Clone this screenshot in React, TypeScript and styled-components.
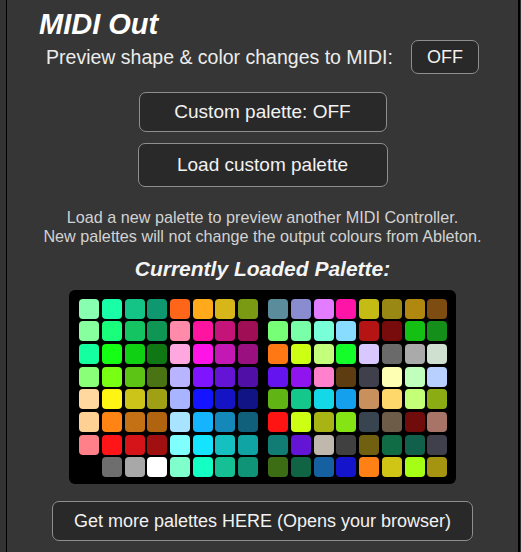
import styled, { createGlobalStyle } from "styled-components";

const GlobalStyle = createGlobalStyle`
  html, body {
    margin: 0;
    padding: 0;
    background: #333333;
  }
  body {
    font-family: "Liberation Sans", Arial, sans-serif;
  }
`;

const leftHalf: (string | null)[][] = [
  ["#88ffb0", "#19ffa8", "#14c486", "#0f9870", "#ff6619", "#ffaa1a", "#d6b619", "#7a9a14"],
  ["#88ff9e", "#19ff7c", "#14c462", "#0f9655", "#ff8aaa", "#ff14a0", "#c4147a", "#a00f55"],
  ["#14ffa0", "#14ff14", "#10d014", "#0f7814", "#ffa8e0", "#ff14e8", "#c418b4", "#9a1080"],
  ["#8aff78", "#78ff14", "#5cc414", "#4a7414", "#b8b4ff", "#7f14ff", "#6414d4", "#5010a8"],
  ["#ffd8a0", "#fff514", "#ccc418", "#a0a014", "#a8b4ff", "#1414ff", "#1414c4", "#101484"],
  ["#ffd094", "#ff8414", "#c47014", "#b06410", "#a8e4ff", "#14b4ff", "#1488b8", "#10607c"],
  ["#ff8088", "#ff1418", "#d41418", "#a01010", "#80ffff", "#14e4ff", "#14c0c0", "#10a4a4"],
  [null, "#6e6e6e", "#a8a8a8", "#ffffff", "#80ffcc", "#14ffc4", "#14c094", "#109478"],
];

const rightHalf: (string | null)[][] = [
  ["#5a8c9c", "#8a8cd0", "#e47cff", "#ff14a8", "#c4bc14", "#9a8814", "#b0880f", "#7c4c10"],
  ["#78ff78", "#78ffa8", "#78ffd8", "#88dcff", "#b41414", "#780c0c", "#14c014", "#14901a"],
  ["#ff7814", "#ccff14", "#c4ff7c", "#14ff2a", "#d8c8ff", "#6a6a6a", "#aaaaaa", "#d0e0d0"],
  ["#6414ee", "#9014ee", "#ff80cc", "#5c3c10", "#40404c", "#ffffb4", "#c0ffbc", "#b8d0ff"],
  ["#60b414", "#14c88c", "#14d8e8", "#14a0ec", "#c8905c", "#ffd86c", "#c4ff78", "#8cac14"],
  ["#ff1414", "#ccff14", "#a8b414", "#84e414", "#384450", "#6c5c48", "#700c0c", "#a87468"],
  ["#107c74", "#6414d4", "#c0b8ac", "#404040", "#706010", "#106c44", "#10604c", "#40404c"],
  ["#3c6c14", "#106444", "#1460a0", "#1414cc", "#ff8014", "#d0c414", "#a4ff14", "#a49410"],
];

const Page = styled.div`
  width: 521px;
  height: 552px;
  display: flex;
  padding: 0 1px 0 6px;
  box-sizing: border-box;
  background: #333333;
`;

const Panel = styled.div`
  flex: 1;
  display: flex;
  flex-direction: column;
  align-items: center;
  padding-top: 8px;
  background: #363636;
  border-left: 1px solid #000;
  border-right: 2px solid #000;
  color: #f2f2f2;
`;

const Title = styled.h1`
  align-self: flex-start;
  margin: 0 0 0 32px;
  font-size: 29px;
  line-height: 32px;
  font-weight: bold;
  font-style: italic;
  color: #ffffff;
`;

const PreviewRow = styled.div`
  display: flex;
  align-items: center;
  gap: 18px;
  height: 34px;
`;

const Label = styled.span`
  font-size: 19.5px;
  color: #ececec;
`;

const Button = styled.button<{ $w: number; $h: number; $size?: number; $mt?: number }>`
  width: ${(p) => p.$w}px;
  height: ${(p) => p.$h}px;
  margin-top: ${(p) => p.$mt ?? 0}px;
  flex-shrink: 0;
  background: #292929;
  border: 1.5px solid #8e8e8e;
  border-radius: 7px;
  color: #f2f2f2;
  font-family: "Liberation Sans", Arial, sans-serif;
  font-size: ${(p) => p.$size ?? 19}px;
  padding: 0;
  cursor: pointer;
`;

const Note = styled.p`
  margin: 21px 0 0;
  font-size: 16.2px;
  line-height: 19px;
  text-align: center;
  color: #d2d2d2;
`;

const PaletteHeading = styled.h2`
  margin: 11px 0 0;
  font-size: 21px;
  line-height: 24px;
  font-weight: bold;
  font-style: italic;
  color: #f4f4f4;
`;

const PaletteBox = styled.div`
  margin-top: 8.5px;
  display: flex;
  gap: 10.4px;
  padding: 9px 9px 7px 10.4px;
  background: #000;
  border-radius: 6px;
`;

const Grid = styled.div`
  display: grid;
  grid-template-columns: repeat(8, 20px);
  grid-auto-rows: 20px;
  gap: 2.7px;
`;

const Cell = styled.div<{ $color: string | null }>`
  border-radius: 4px;
  background: ${(p) => p.$color ?? "transparent"};
`;

const Half = ({ rows }: { rows: (string | null)[][] }) => (
  <Grid>
    {rows.flat().map((c, i) => (
      <Cell key={i} $color={c} />
    ))}
  </Grid>
);

export default function App() {
  return (
    <>
      <GlobalStyle />
      <Page>
        <Panel>
          <Title>MIDI Out</Title>
          <PreviewRow>
            <Label>Preview shape &amp; color changes to MIDI:</Label>
            <Button $w={68} $h={34} $size={18}>
              OFF
            </Button>
          </PreviewRow>
          <Button $w={248} $h={40} $mt={18}>
            Custom palette: OFF
          </Button>
          <Button $w={250} $h={44} $mt={11}>
            Load custom palette
          </Button>
          <Note>
            Load a new palette to preview another MIDI Controller.
            <br />
            New palettes will not change the output colours from Ableton.
          </Note>
          <PaletteHeading>Currently Loaded Palette:</PaletteHeading>
          <PaletteBox>
            <Half rows={leftHalf} />
            <Half rows={rightHalf} />
          </PaletteBox>
          <Button $w={421} $h={40} $size={18} $mt={17}>
            Get more palettes HERE (Opens your browser)
          </Button>
        </Panel>
      </Page>
    </>
  );
}
